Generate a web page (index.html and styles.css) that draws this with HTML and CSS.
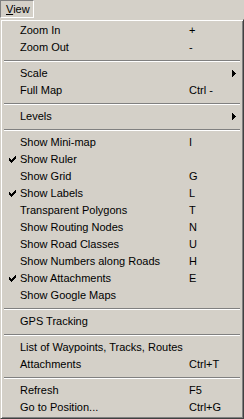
FILE: index.html
```html
<!DOCTYPE html>
<html lang="en">
<head>
    <meta charset="UTF-8">
    <title>View menu</title>
    <link rel="stylesheet" href="styles.css">
</head>
<body>
    <div class="menubar">
        <span class="menu-title"><u>V</u>iew</span>
    </div>
    <ul class="menu">
        <li class="item"><span class="check"></span><span class="label">Zoom In</span><span class="key">+</span></li>
        <li class="item"><span class="check"></span><span class="label">Zoom Out</span><span class="key">-</span></li>
        <li class="sep"></li>
        <li class="item"><span class="check"></span><span class="label">Scale</span><span class="key"></span><span class="arrow"><svg viewBox="0 0 4 7" width="4" height="7"><path d="M0 0h1v1h1v1h1v1h1v1H3v1H2v1H1v1H0z"/></svg></span></li>
        <li class="item"><span class="check"></span><span class="label">Full Map</span><span class="key">Ctrl -</span></li>
        <li class="sep"></li>
        <li class="item"><span class="check"></span><span class="label">Levels</span><span class="key"></span><span class="arrow"><svg viewBox="0 0 4 7" width="4" height="7"><path d="M0 0h1v1h1v1h1v1h1v1H3v1H2v1H1v1H0z"/></svg></span></li>
        <li class="sep"></li>
        <li class="item"><span class="check"></span><span class="label">Show Mini-map</span><span class="key">I</span></li>
        <li class="item"><span class="check"><svg viewBox="0 0 7 7" width="7" height="7"><path d="M0 2h1v1h1v1h1V3h1V2h1V1h1V0h1v3H6v1H5v1H4v1H3v1H2V6H1V5H0z"/></svg></span><span class="label">Show Ruler</span><span class="key"></span></li>
        <li class="item"><span class="check"></span><span class="label">Show Grid</span><span class="key">G</span></li>
        <li class="item"><span class="check"><svg viewBox="0 0 7 7" width="7" height="7"><path d="M0 2h1v1h1v1h1V3h1V2h1V1h1V0h1v3H6v1H5v1H4v1H3v1H2V6H1V5H0z"/></svg></span><span class="label">Show Labels</span><span class="key">L</span></li>
        <li class="item"><span class="check"></span><span class="label">Transparent Polygons</span><span class="key">T</span></li>
        <li class="item"><span class="check"></span><span class="label">Show Routing Nodes</span><span class="key">N</span></li>
        <li class="item"><span class="check"></span><span class="label">Show Road Classes</span><span class="key">U</span></li>
        <li class="item"><span class="check"></span><span class="label">Show Numbers along Roads</span><span class="key">H</span></li>
        <li class="item"><span class="check"><svg viewBox="0 0 7 7" width="7" height="7"><path d="M0 2h1v1h1v1h1V3h1V2h1V1h1V0h1v3H6v1H5v1H4v1H3v1H2V6H1V5H0z"/></svg></span><span class="label">Show Attachments</span><span class="key">E</span></li>
        <li class="item"><span class="check"></span><span class="label">Show Google Maps</span><span class="key"></span></li>
        <li class="sep"></li>
        <li class="item"><span class="check"></span><span class="label">GPS Tracking</span><span class="key"></span></li>
        <li class="sep"></li>
        <li class="item"><span class="check"></span><span class="label">List of Waypoints, Tracks, Routes</span><span class="key"></span></li>
        <li class="item"><span class="check"></span><span class="label">Attachments</span><span class="key">Ctrl+T</span></li>
        <li class="sep"></li>
        <li class="item"><span class="check"></span><span class="label">Refresh</span><span class="key">F5</span></li>
        <li class="item"><span class="check"></span><span class="label">Go to Position...</span><span class="key">Ctrl+G</span></li>
    </ul>
</body>
</html>
```
FILE: styles.css
```css
body {
    margin: 0;
    background: #d4d0c8;
    font-family: "Liberation Sans", Arial, sans-serif;
    font-size: 11px;
    color: #000;
}
.menubar {
    height: 19px;
}
.menu-title {
    display: inline-block;
    box-sizing: border-box;
    width: 34px;
    height: 18px;
    padding-left: 5px;
    line-height: 16px;
    border-top: 1px solid #808080;
    border-left: 1px solid #808080;
    border-right: 1px solid #fff;
    border-bottom: 1px solid #fff;
}
.menu {
    list-style: none;
    margin: 0;
    box-sizing: border-box;
    width: 244px;
    height: 400px;
    border: 1px solid;
    border-color: #d4d0c8 #404040 #404040 #d4d0c8;
    box-shadow: inset 1px 1px 0 #fff, inset -1px -1px 0 #808080;
    padding: 2px;
}
.item {
    display: grid;
    grid-template-columns: 17px 169px 1fr 12px;
    align-items: center;
    height: 17px;
    line-height: 17px;
    white-space: nowrap;
}
.check {
    display: flex;
    justify-content: flex-end;
    padding-right: 4px;
}
.check svg,
.arrow svg {
    display: block;
}
.arrow {
    padding-left: 3px;
}
.sep {
    height: 9px;
    margin: 0 1px;
    display: flex;
    flex-direction: column;
    justify-content: center;
}
.sep::before {
    content: "";
    display: block;
    border-top: 1px solid #808080;
    border-bottom: 1px solid #fff;
}
```
